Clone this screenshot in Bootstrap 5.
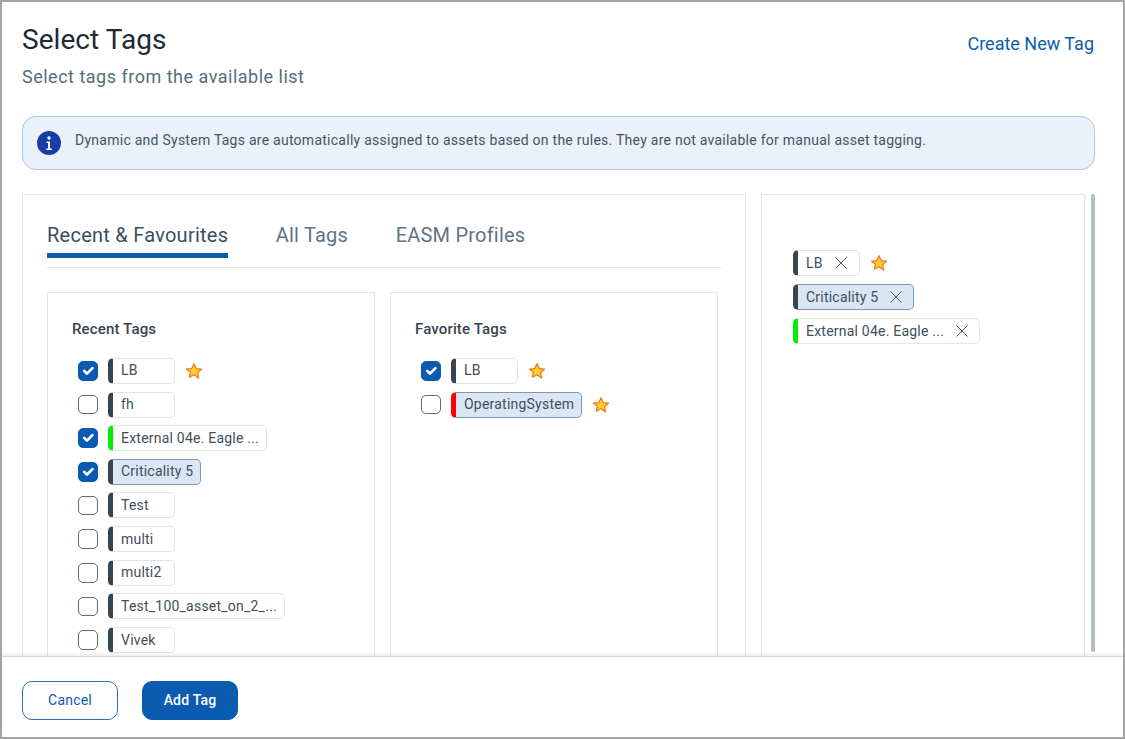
<!doctype html>
<html lang="en">
<head>
    <meta charset="utf-8">
    <meta name="viewport" content="width=device-width, initial-scale=1">
    <title>Select Tags</title>
    <link href="https://cdn.jsdelivr.net/npm/bootstrap@5.3.3/dist/css/bootstrap.min.css" rel="stylesheet" crossorigin="anonymous">
    <style>
        html, body { height: 100%; overflow: hidden; }
        body { font-family: Roboto, "Liberation Sans", sans-serif; background: #fff; color: #36454f; }
        .dlg { height: 739px; border: 2px solid #a6a6a6; display: flex; flex-direction: column; }
        .dlg-main { flex: 1 1 auto; min-height: 0; overflow: hidden; padding: 21px 29px 0 20px; }
        .dlg-title { font-size: 28px; font-weight: 400; line-height: 34px; letter-spacing: .05px; color: #212b36; margin: 0; }
        .dlg-sub { font-size: 18px; line-height: 24px; color: #546e7a; letter-spacing: .5px; margin: 8px 0 0; }
        .new-link { font-size: 18px; color: #0b5cb0; text-decoration: none; margin-top: 7px; line-height: 28px; }
        .info-box { height: 54px; margin-top: 27px; margin-right: -1px; padding: 0 14px; background: #ebf1f9; border: 1px solid #a9c7e8; border-radius: 14px; font-size: 14px; letter-spacing: .257px; color: #46555f; gap: 15px; }
        .info-text { padding-bottom: 5px; margin-left: -1px; }
        .panes { margin-top: 24px; gap: 15px; }
        .pane-left { width: 724px; height: 480px; flex: none; border: 1px solid #dfe6ec; padding: 24px 24px 0 24px; }
        .pane-right { width: 324px; height: 480px; flex: none; border: 1px solid #dfe6ec; padding: 55px 30px 0 31px; }
        .scroll-thumb { width: 4px; height: 458px; flex: none; margin-left: -9px; background: #b0bfca; border-radius: 2px; }
        .tab-row { border-bottom: 1px solid #e2e6ea; height: 49px; gap: 47.5px; }
        .tab-item { font-size: 20px; line-height: 32px; letter-spacing: .22px; color: #5d7584; height: 39px; }
        .tab-on { color: #3b4f5c; border-bottom: 5px solid #0b5cb0; box-sizing: content-box; height: 34px; letter-spacing: .25px; }
        .tag-cols { margin-top: 24px; gap: 15px; }
        .tag-pane { width: 328px; height: 400px; flex: none; border: 1px solid #dfe6ec; padding: 26px 24px 0; }
        .tag-head { font-size: 15px; font-weight: 500; line-height: 20px; letter-spacing: .15px; color: #36454f; margin: 0 0 19px; }
        .tag-list { display: flex; flex-direction: column; gap: 7.65px; padding-left: 6px; margin-top: -.1px; }
        .tag-row { display: flex; align-items: center; height: 26px; }
        .tag-row .form-check-input { width: 19.5px; height: 19.5px; margin: 0 10.5px 0 0; flex: none; border: 1px solid #546e7a; border-radius: 5px; }
        .tag-row .form-check-input:checked { background-color: #0b5cb0; border-color: #0b5cb0; }
        .tag-chip { display: inline-flex; align-items: center; height: 26px; min-width: 67px; padding: 0 7px 0 8px; border: 1px solid #dde3e8; border-left: 5px solid #36454f; border-radius: 5px; background: #fff; font-size: 14px; letter-spacing: .22px; color: #3f4f5a; white-space: nowrap; }
        .chip-sel { background: #dae6f3; border-color: #7f98ad; border-left-color: #36454f; }
        .chip-green { border-color: #d8f0d8; border-left-color: #00ee00; }
        .chip-red { border-left-color: #f00; }
        .fav-star { width: 18px; height: 18px; margin-left: 10px; flex: none; }
        .chip-x { width: 12px; height: 12px; margin-left: 12px; flex: none; }
        .chip-rm { padding-right: 11px; }
        .picked { display: flex; flex-direction: column; gap: 8px; }
        .dlg-foot { height: 81px; flex: none; background: #fff; border-top: 1px solid #cfd6dc; box-shadow: 0 -2px 3px rgba(0,0,0,.08); padding: 24px 20px 0; gap: 24px; position: relative; }
        .btn-cancel, .btn-add { width: 96px; height: 39px; font-size: 14px; letter-spacing: .2px; border-radius: 10px; padding: 0; }
        .btn-cancel { color: #0b5cb0; border: 1px solid #2a6fb8; background: #fff; }
        .btn-add { color: #fff; background: #0b5cb0; border: 1px solid #0b5cb0; font-weight: 500; }
    </style>
</head>
<body>
    <svg width="0" height="0" class="position-absolute">
        <symbol id="star" viewBox="0 0 24 24"><path d="M12 2.200l3 6.500 7 .9-5.200 4.800 1.400 7L12 17l-6.200 3.400 1.400-7L2 9.600l7-.9z" fill="#fdd02f" stroke="#ee7a22" stroke-width="1.700" stroke-linejoin="round"/></symbol>
        <symbol id="close" viewBox="0 0 12 12"><path d="M.5.5l11 11M11.500.5l-11 11" stroke="#4a5b66" stroke-width="1" fill="none"/></symbol>
    </svg>

    <div class="dlg">
        <div class="dlg-main">
            <div class="d-flex justify-content-between align-items-start">
                <div>
                    <h1 class="dlg-title">Select Tags</h1>
                    <p class="dlg-sub">Select tags from the available list</p>
                </div>
                <a href="#" class="new-link">Create New Tag</a>
            </div>

            <div class="info-box d-flex align-items-center">
                <svg width="24" height="24" viewBox="0 0 24 24" class="flex-shrink-0">
                    <circle cx="12" cy="12" r="12" fill="#1a3ca5"/>
                    <circle cx="12" cy="7" r="1.700" fill="#fff"/>
                    <path d="M9.500 10.500h3.500v7h1.800v1.500H9.300v-1.500h1.700v-5.500H9.500z" fill="#fff"/>
                </svg>
                <span class="info-text">Dynamic and System Tags are automatically assigned to assets based on the rules. They are not available for manual asset tagging.</span>
            </div>

            <div class="panes d-flex">
                <div class="pane-left">
                    <div class="tab-row d-flex">
                        <div class="tab-item tab-on">Recent &amp; Favourites</div>
                        <div class="tab-item">All Tags</div>
                        <div class="tab-item">EASM Profiles</div>
                    </div>
                    <div class="tag-cols d-flex">
                        <div class="tag-pane">
                            <h2 class="tag-head">Recent Tags</h2>
                            <div class="tag-list">
                                <div class="tag-row"><input class="form-check-input" type="checkbox" checked><span class="tag-chip">LB</span><svg class="fav-star"><use href="#star"/></svg></div>
                                <div class="tag-row"><input class="form-check-input" type="checkbox"><span class="tag-chip">fh</span></div>
                                <div class="tag-row"><input class="form-check-input" type="checkbox" checked><span class="tag-chip chip-green">External 04e. Eagle ...</span></div>
                                <div class="tag-row"><input class="form-check-input" type="checkbox" checked><span class="tag-chip chip-sel">Criticality 5</span></div>
                                <div class="tag-row"><input class="form-check-input" type="checkbox"><span class="tag-chip">Test</span></div>
                                <div class="tag-row"><input class="form-check-input" type="checkbox"><span class="tag-chip">multi</span></div>
                                <div class="tag-row"><input class="form-check-input" type="checkbox"><span class="tag-chip">multi2</span></div>
                                <div class="tag-row"><input class="form-check-input" type="checkbox"><span class="tag-chip">Test_100_asset_on_2_...</span></div>
                                <div class="tag-row"><input class="form-check-input" type="checkbox"><span class="tag-chip">Vivek</span></div>
                            </div>
                        </div>
                        <div class="tag-pane">
                            <h2 class="tag-head">Favorite Tags</h2>
                            <div class="tag-list">
                                <div class="tag-row"><input class="form-check-input" type="checkbox" checked><span class="tag-chip">LB</span><svg class="fav-star"><use href="#star"/></svg></div>
                                <div class="tag-row"><input class="form-check-input" type="checkbox"><span class="tag-chip chip-sel chip-red">OperatingSystem</span><svg class="fav-star"><use href="#star"/></svg></div>
                            </div>
                        </div>
                    </div>
                </div>
                <div class="pane-right">
                    <div class="picked">
                        <div class="tag-row"><span class="tag-chip chip-rm">LB<svg class="chip-x"><use href="#close"/></svg></span><svg class="fav-star"><use href="#star"/></svg></div>
                        <div class="tag-row"><span class="tag-chip chip-rm chip-sel">Criticality 5<svg class="chip-x"><use href="#close"/></svg></span></div>
                        <div class="tag-row"><span class="tag-chip chip-rm chip-green">External 04e. Eagle ...<svg class="chip-x"><use href="#close"/></svg></span></div>
                    </div>
                </div>
                <div class="scroll-thumb"></div>
            </div>
        </div>

        <div class="dlg-foot d-flex">
            <button type="button" class="btn btn-cancel">Cancel</button>
            <button type="button" class="btn btn-add">Add Tag</button>
        </div>
    </div>

    <script src="https://cdn.jsdelivr.net/npm/bootstrap@5.3.3/dist/js/bootstrap.bundle.min.js" crossorigin="anonymous"></script>
</body>
</html>
